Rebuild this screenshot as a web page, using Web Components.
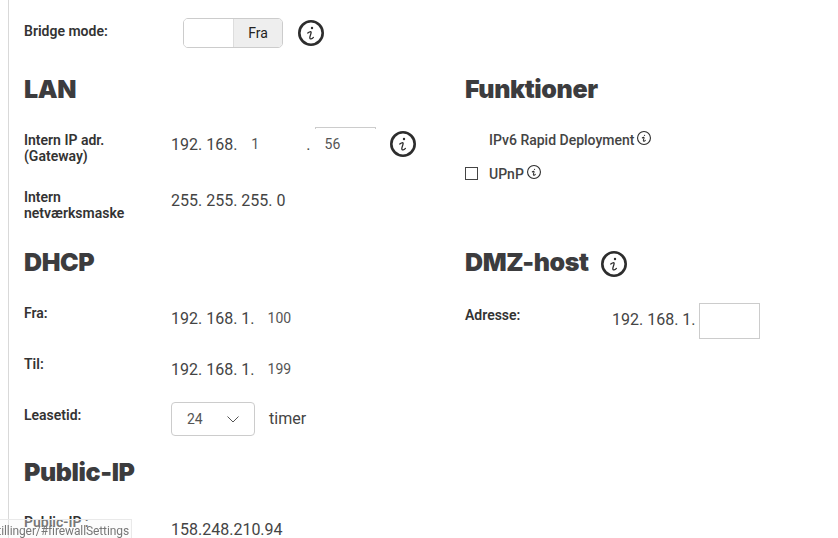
<!DOCTYPE html>
<html lang="da">
<head>
<meta charset="utf-8">
<title>Indstillinger</title>
<style>
  html, body { margin: 0; height: 538px; overflow: hidden; background: #fff; }
  body { font-family: Roboto, "Liberation Sans", sans-serif; color: #444; }
  .columns { display: grid; grid-template-columns: 441px 1fr; grid-template-rows: 173px 210px auto; }
</style>
</head>
<body>

<settings-page>
  <settings-row label="Bridge mode:" style="--row-h: 30px; --row-mb: 26px; --label-top: 5px">
    <toggle-switch style="margin-left: 12px">Fra</toggle-switch>
    <info-icon size="26" style="margin-left: 15px"></info-icon>
  </settings-row>

  <div class="columns">
    <settings-section title="LAN">
      <settings-row label="Intern IP adr. (Gateway)" style="--row-h: 34px; --row-mb: 26px; --label-top: 5px">
        <span>192. 168.</span>
        <ip-input width="59" style="padding-left: 14px">1</ip-input>
        <span style="margin: 0 4px 0 10px">.</span>
        <ip-input width="61" top-edge>56</ip-input>
        <info-icon size="26" style="margin-left: 14px"></info-icon>
      </settings-row>
      <settings-row label="Intern netværksmaske" style="--row-h: 34px; --row-mb: 0px; --label-top: 2px; --align: flex-start">
        <span style="padding-top: 4px">255. 255. 255. 0</span>
      </settings-row>
    </settings-section>

    <settings-section title="Funktioner" style="--head-gap: 19px">
      <check-row bare>IPv6 Rapid Deployment</check-row>
      <check-row style="margin-top: 1px">UPnP</check-row>
    </settings-section>

    <settings-section title="DHCP">
      <settings-row label="Fra:" style="--row-h: 36px; --row-mb: 15px; --label-top: 5px">
        <span>192. 168. 1.</span>
        <ip-input width="40" style="padding-left: 13px">100</ip-input>
      </settings-row>
      <settings-row label="Til:" style="--row-h: 36px; --row-mb: 15px; --label-top: 5px">
        <span>192. 168. 1.</span>
        <ip-input width="40" style="padding-left: 13px">199</ip-input>
      </settings-row>
      <settings-row label="Leasetid:" style="--row-h: 34px; --row-mb: 0px; --label-top: 5px">
        <select-box>24</select-box>
        <span style="margin: 0 0 2px 14px">timer</span>
      </settings-row>
    </settings-section>

    <settings-section title="DMZ-host" info style="--head-gap: 26px">
      <settings-row label="Adresse:" style="--row-h: 36px; --row-mb: 0px; --label-top: 4px">
        <span style="margin-bottom: 4px">192. 168. 1.</span>
        <ip-input width="61" boxed></ip-input>
      </settings-row>
    </settings-section>

    <settings-section title="Public-IP">
      <settings-row label="Public-IP :" style="--row-h: 38px; --row-mb: 0px; --label-top: 4px">
        <span>158.248.210.94</span>
      </settings-row>
    </settings-section>
  </div>
</settings-page>

<link-tip>indstillinger/#firewallSettings</link-tip>

<script>
class SettingsPage extends HTMLElement {
  constructor() {
    super();
    this.attachShadow({ mode: "open" }).innerHTML = `
      <style>
        :host {
          display: block;
          margin-left: 8px;
          height: 538px;
          box-sizing: border-box;
          padding: 18px 0 0 15px;
          border-left: 1px solid #d9d9d9;
        }
      </style>
      <slot></slot>`;
  }
}

class SettingsSection extends HTMLElement {
  constructor() {
    super();
    const info = this.hasAttribute("info")
      ? '<info-icon size="26" style="margin-left: 12px; margin-top: 3px"></info-icon>' : "";
    this.attachShadow({ mode: "open" }).innerHTML = `
      <style>
        :host { display: block; }
        .head { display: flex; align-items: center; height: 30px; margin-bottom: var(--head-gap, 23px); }
        h2 {
          margin: 0;
          font: 900 25px/30px Inter, "Noto Sans", sans-serif;
          color: #3c3c3e;
          letter-spacing: -0.4px;
        }
      </style>
      <div class="head"><h2>${this.getAttribute("title")}</h2>${info}</div>
      <slot></slot>`;
    this.removeAttribute("title");
  }
}

class SettingsRow extends HTMLElement {
  constructor() {
    super();
    this.attachShadow({ mode: "open" }).innerHTML = `
      <style>
        :host {
          display: flex;
          height: var(--row-h, 34px);
          margin-bottom: var(--row-mb, 0);
          font-size: 16px;
          color: #444;
        }
        .label {
          flex: 0 0 147px;
          box-sizing: border-box;
          padding: var(--label-top, 3px) 20px 0 0;
          font-weight: 600;
          font-size: 14px;
          line-height: 16px;
          color: #333;
        }
        .value { display: flex; align-items: var(--align, center); }
      </style>
      <div class="label">${this.getAttribute("label")}</div>
      <div class="value"><slot></slot></div>`;
  }
}

class ToggleSwitch extends HTMLElement {
  constructor() {
    super();
    this.attachShadow({ mode: "open" }).innerHTML = `
      <style>
        :host {
          display: flex;
          box-sizing: border-box;
          width: 100px;
          height: 30px;
          border: 1px solid #ccc;
          border-radius: 5px;
          overflow: hidden;
          font-size: 14px;
          color: #222;
        }
        .off { flex: 0 0 49px; background: #fff; border-right: 1px solid #ddd; }
        .on { flex: 1; background: #eee; display: flex; align-items: center; justify-content: center; }
      </style>
      <div class="off"></div>
      <div class="on"><slot></slot></div>`;
  }
}

class InfoIcon extends HTMLElement {
  constructor() {
    super();
    const size = Number(this.getAttribute("size")) || 26;
    const stroke = size > 20 ? 2.6 : 1.1;
    const s = 26 / size;
    this.attachShadow({ mode: "open" }).innerHTML = `
      <style>:host { display: inline-flex; flex: none; } svg { display: block; }</style>
      <svg width="${size}" height="${size}" viewBox="0 0 26 26" fill="none" stroke="#2d2d2d">
        <circle cx="13" cy="13" r="${13 - (stroke * s) / 2}" stroke-width="${stroke * s}"/>
        <path d="M9.800 13c1.300-1.200 3.500-2 3.300-.3-.2 1.600-1.300 3.600-1.300 5.100 0 1.900 2.200 1.200 3.600-.4"
              stroke-width="${Math.min(1.3 * s, 1.900)}" stroke-linecap="round"/>
        <circle cx="14" cy="8" r="1.200" fill="#2d2d2d" stroke="none"/>
      </svg>`;
  }
}

class IpInput extends HTMLElement {
  constructor() {
    super();
    this.attachShadow({ mode: "open" }).innerHTML = `
      <style>
        :host {
          display: inline-flex;
          align-items: center;
          box-sizing: border-box;
          width: ${this.getAttribute("width")}px;
          font-size: 14px;
          color: #555;
          padding-left: 10px;
        }
        :host([top-edge]) {
          position: relative;
          height: 34px;
          align-self: flex-start;
        }
        :host([top-edge])::before {
          content: "";
          position: absolute;
          inset: 0 0 auto 0;
          height: 2px;
          border: 1px solid #ccc;
          border-bottom: 0;
          box-sizing: border-box;
        }
        :host([boxed]) {
          height: 36px;
          border: 1px solid #ccc;
          margin-left: 3px;
        }
      </style>
      <slot></slot>`;
  }
}

class CheckRow extends HTMLElement {
  constructor() {
    super();
    this.attachShadow({ mode: "open" }).innerHTML = `
      <style>
        :host {
          display: flex;
          align-items: center;
          height: 33px;
          font-size: 14px;
          font-weight: 500;
          color: #444;
        }
        .box {
          flex: 0 0 13px;
          height: 13px;
          box-sizing: border-box;
          border: 1px solid #444;
          margin-right: 11px;
        }
        :host([bare]) .box { visibility: hidden; }
        info-icon { margin-left: 3px; margin-top: -3px; }
      </style>
      <span class="box"></span>
      <slot></slot>
      <info-icon size="14"></info-icon>`;
  }
}

class SelectBox extends HTMLElement {
  constructor() {
    super();
    this.attachShadow({ mode: "open" }).innerHTML = `
      <style>
        :host {
          display: flex;
          align-items: center;
          justify-content: space-between;
          box-sizing: border-box;
          width: 84px;
          height: 34px;
          padding: 0 15px;
          border: 1px solid #ccc;
          border-radius: 4px;
          font-size: 14px;
          color: #555;
        }
        svg { display: block; }
      </style>
      <slot></slot>
      <svg width="12" height="7" viewBox="0 0 12 7" fill="none" stroke="#555" stroke-width="1">
        <path d="M.5.5 6 6l5.500-5.500"/>
      </svg>`;
  }
}

class LinkTip extends HTMLElement {
  constructor() {
    super();
    this.attachShadow({ mode: "open" }).innerHTML = `
      <style>
        :host {
          position: fixed;
          left: 0;
          bottom: 0;
          width: 132px;
          height: 19px;
          box-sizing: border-box;
          display: flex;
          justify-content: flex-end;
          align-items: center;
          overflow: hidden;
          white-space: nowrap;
          padding: 3px 2px 0 0;
          background: rgba(245, 245, 245, .35);
          border-top: 1px solid #e9e9e9;
          border-right: 1px solid #e9e9e9;
          font-size: 12px;
          letter-spacing: -0.1px;
          color: #777;
        }
      </style>
      <slot></slot>`;
  }
}

customElements.define("settings-page", SettingsPage);
customElements.define("settings-section", SettingsSection);
customElements.define("settings-row", SettingsRow);
customElements.define("toggle-switch", ToggleSwitch);
customElements.define("info-icon", InfoIcon);
customElements.define("ip-input", IpInput);
customElements.define("check-row", CheckRow);
customElements.define("select-box", SelectBox);
customElements.define("link-tip", LinkTip);
</script>
</body>
</html>
